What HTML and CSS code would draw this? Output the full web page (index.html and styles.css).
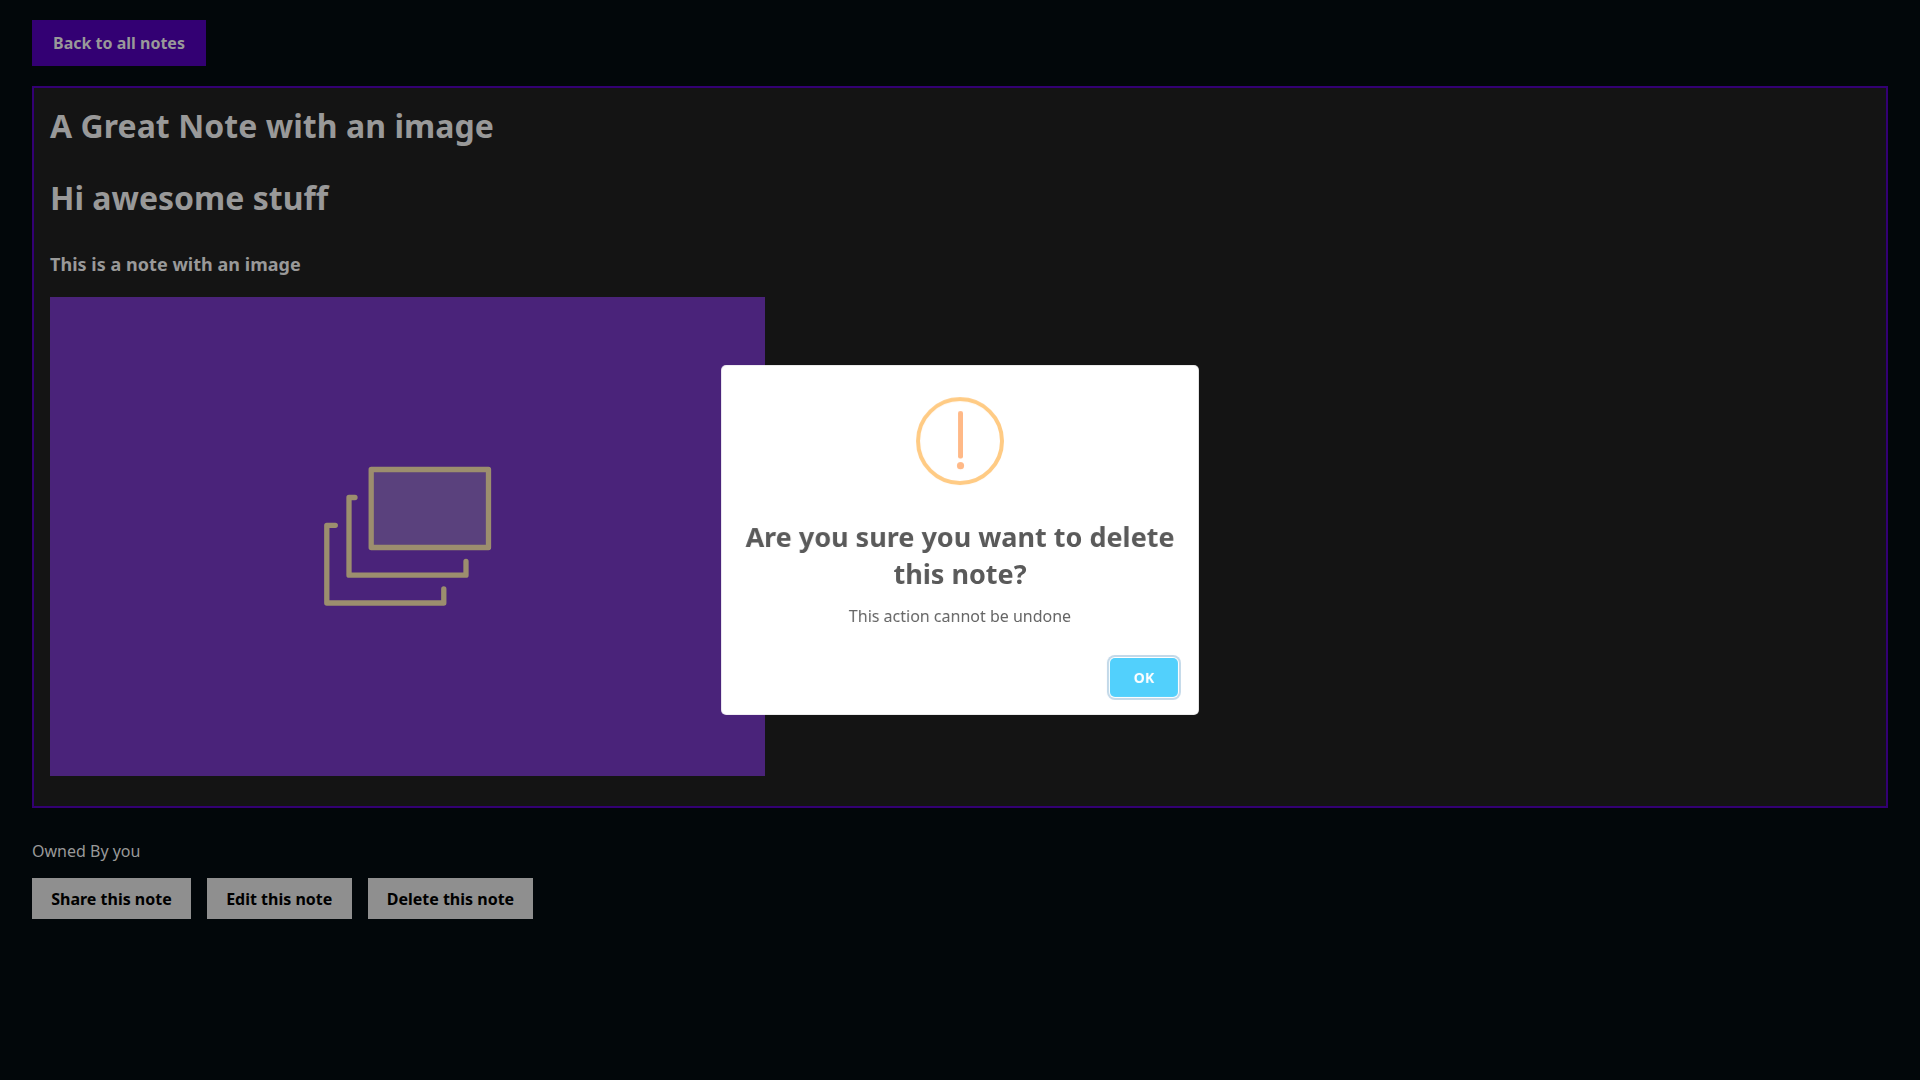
FILE: index.html
```html
<!DOCTYPE html>
<html lang="en">
<head>
<meta charset="utf-8">
<title>A Great Note with an image</title>
<link rel="stylesheet" href="styles.css">
</head>
<body>
<main class="page">
  <a class="back">Back to all notes</a>
  <article class="note">
    <h1 class="note-title">A Great Note with an image</h1>
    <h1 class="note-heading">Hi awesome stuff</h1>
    <h3 class="note-sub">This is a note with an image</h3>
    <svg class="note-image" viewBox="0 0 715 479" width="715" height="479">
      <rect width="715" height="479" fill="#4a237a"/>
      <g stroke="#9c8e6e" stroke-width="5.3" stroke-linejoin="round" stroke-linecap="round" fill="none">
        <rect x="321.2" y="172.5" width="117.3" height="78" fill="#5a417d"/>
        <path d="M305 200.5H299V278.2H416V264.3"/>
        <path d="M285.3 228.3H276.8V306H393.8V292"/>
      </g>
    </svg>
  </article>
  <p class="owner">Owned By you</p>
  <div class="actions">
    <button class="action">Share this note</button>
    <button class="action">Edit this note</button>
    <button class="action">Delete this note</button>
  </div>
</main>
<div class="overlay">
  <section class="modal">
    <svg class="modal-icon" viewBox="0 0 88 88" width="88" height="88">
      <circle cx="44" cy="44" r="42" fill="none" stroke="#ffcb84" stroke-width="4"/>
      <rect x="42" y="14" width="5" height="47.5" rx="2" fill="#ffb987"/>
      <circle cx="44.5" cy="68.7" r="3.6" fill="#ffb987"/>
    </svg>
    <h2 class="modal-title">Are you sure you want to delete this note?</h2>
    <p class="modal-text">This action cannot be undone</p>
    <div class="modal-footer"><button class="ok">OK</button></div>
  </section>
</div>
</body>
</html>
```
FILE: styles.css
```css
* { box-sizing: border-box; }
body {
  margin: 0;
  background: #02070a;
  color: #999;
  font: 16px/22px "Noto Sans", sans-serif;
}
.page { padding: 20px 32px; }
.back {
  display: block;
  width: 174px;
  height: 46px;
  background: #330073;
  font-weight: 700;
  line-height: 46px;
  text-align: center;
}
.note {
  height: 722px;
  margin-top: 20px;
  padding: 16px;
  border: 2px solid #330073;
  background: #141414;
}
.note-title, .note-heading { margin: 0; font-size: 32px; line-height: 44px; }
.note-title { letter-spacing: 0.05px; }
.note-heading { margin-top: 28px; }
.note-sub { margin: 31px 0 20px; font-size: 18px; line-height: 26px; font-weight: 700; letter-spacing: 0.03px; }
.note-image { display: block; }
.owner { margin: 32px 0 16px; }
.actions { display: flex; gap: 16px; }
.action {
  height: 41px;
  padding: 0 19.2px;
  border: 0;
  background: #8f8f8f;
  color: #000;
  font: 700 16px "Noto Sans", sans-serif;
}
.overlay {
  position: fixed;
  inset: 0;
  display: flex;
  align-items: center;
  justify-content: center;
}
.modal {
  width: 478px;
  height: 350px;
  padding: 31.5px 0 0;
  border-radius: 5px;
  background: #fff;
  color: #5a5a5a;
  text-align: center;
  transform: scale(0.9995);
  will-change: transform;
}
.modal-icon { display: block; margin: 0 auto; }
.modal-title { margin: 33px 0 0; padding: 0 16px; font-size: 27px; line-height: 37px; font-weight: 700; }
.modal-text { margin: 13px 0 0; color: #666; line-height: 22px; }
.modal-footer { margin-top: 31px; padding-right: 21px; text-align: right; }
.ok {
  width: 68px;
  height: 39px;
  border: 0;
  border-radius: 5px;
  background: #52d0fc;
  color: #fff;
  font: 700 14px "Noto Sans", sans-serif;
  box-shadow: 0 0 0 1px #fff, 0 0 0 3px #c3d9e9;
}
```
